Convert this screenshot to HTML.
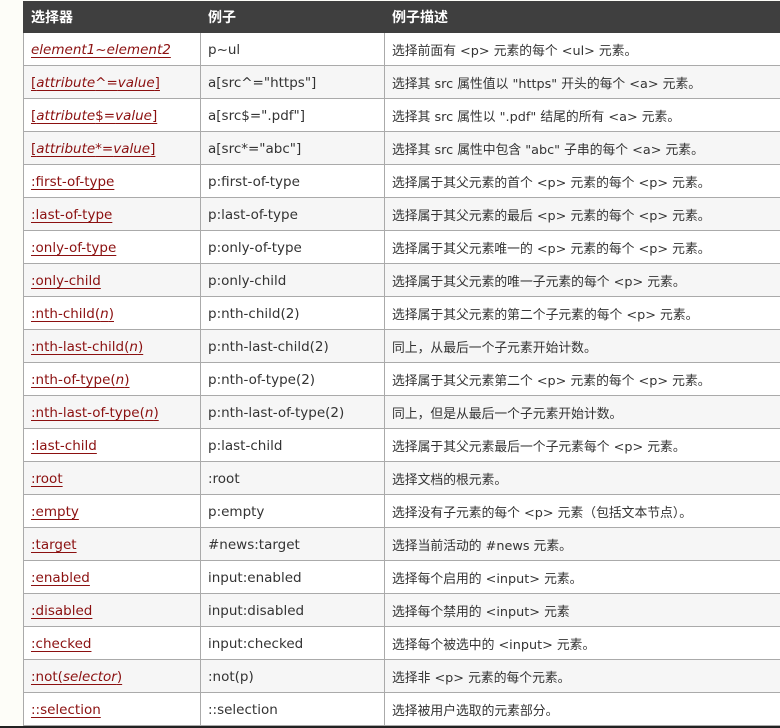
<!DOCTYPE html>
<html><head><meta charset="utf-8"><style>
html,body{margin:0;padding:0;background:#fdfdf8;width:780px;height:728px;overflow:hidden}
table{position:absolute;left:23px;top:1px;border-collapse:collapse;width:758px;font-family:"DejaVu Sans","Noto Sans CJK SC",sans-serif;font-size:13.5px;color:#333}
th{background:#3f3f3f;color:#fff;text-align:left;height:30px;padding:0 7px;font-family:"Liberation Sans","Noto Sans CJK SC",sans-serif;font-size:14px;font-weight:bold;border:1px solid #3f3f3f}
td{height:31px;padding:1px 7px 0;border:1px solid #aaa;background:#fff;white-space:nowrap}
tr:nth-child(odd) td{background:#f6f6f6}
td:nth-child(3){font-size:12.8px}
a{color:#8b1010;text-decoration:underline;text-underline-offset:3px}
.bar{position:absolute;left:0;top:726px;width:780px;height:2px;background:#222}
</style></head><body>
<table>
<colgroup><col style="width:177px"><col style="width:184px"><col></colgroup>
<tr><th>选择器</th><th>例子</th><th>例子描述</th></tr>
<tr><td><a><i>element1~element2</i></a></td><td>p~ul</td><td>选择前面有 &lt;p&gt; 元素的每个 &lt;ul&gt; 元素。</td></tr>
<tr><td><a>[<i>attribute</i>^=<i>value</i>]</a></td><td>a[src^="https"]</td><td>选择其 src 属性值以 "https" 开头的每个 &lt;a&gt; 元素。</td></tr>
<tr><td><a>[<i>attribute</i>$=<i>value</i>]</a></td><td>a[src$=".pdf"]</td><td>选择其 src 属性以 ".pdf" 结尾的所有 &lt;a&gt; 元素。</td></tr>
<tr><td><a>[<i>attribute</i>*=<i>value</i>]</a></td><td>a[src*="abc"]</td><td>选择其 src 属性中包含 "abc" 子串的每个 &lt;a&gt; 元素。</td></tr>
<tr><td><a>:first-of-type</a></td><td>p:first-of-type</td><td>选择属于其父元素的首个 &lt;p&gt; 元素的每个 &lt;p&gt; 元素。</td></tr>
<tr><td><a>:last-of-type</a></td><td>p:last-of-type</td><td>选择属于其父元素的最后 &lt;p&gt; 元素的每个 &lt;p&gt; 元素。</td></tr>
<tr><td><a>:only-of-type</a></td><td>p:only-of-type</td><td>选择属于其父元素唯一的 &lt;p&gt; 元素的每个 &lt;p&gt; 元素。</td></tr>
<tr><td><a>:only-child</a></td><td>p:only-child</td><td>选择属于其父元素的唯一子元素的每个 &lt;p&gt; 元素。</td></tr>
<tr><td><a>:nth-child(<i>n</i>)</a></td><td>p:nth-child(2)</td><td>选择属于其父元素的第二个子元素的每个 &lt;p&gt; 元素。</td></tr>
<tr><td><a>:nth-last-child(<i>n</i>)</a></td><td>p:nth-last-child(2)</td><td>同上，从最后一个子元素开始计数。</td></tr>
<tr><td><a>:nth-of-type(<i>n</i>)</a></td><td>p:nth-of-type(2)</td><td>选择属于其父元素第二个 &lt;p&gt; 元素的每个 &lt;p&gt; 元素。</td></tr>
<tr><td><a>:nth-last-of-type(<i>n</i>)</a></td><td>p:nth-last-of-type(2)</td><td>同上，但是从最后一个子元素开始计数。</td></tr>
<tr><td><a>:last-child</a></td><td>p:last-child</td><td>选择属于其父元素最后一个子元素每个 &lt;p&gt; 元素。</td></tr>
<tr><td><a>:root</a></td><td>:root</td><td>选择文档的根元素。</td></tr>
<tr><td><a>:empty</a></td><td>p:empty</td><td>选择没有子元素的每个 &lt;p&gt; 元素（包括文本节点）。</td></tr>
<tr><td><a>:target</a></td><td>#news:target</td><td>选择当前活动的 #news 元素。</td></tr>
<tr><td><a>:enabled</a></td><td>input:enabled</td><td>选择每个启用的 &lt;input&gt; 元素。</td></tr>
<tr><td><a>:disabled</a></td><td>input:disabled</td><td>选择每个禁用的 &lt;input&gt; 元素</td></tr>
<tr><td><a>:checked</a></td><td>input:checked</td><td>选择每个被选中的 &lt;input&gt; 元素。</td></tr>
<tr><td><a>:not(<i>selector</i>)</a></td><td>:not(p)</td><td>选择非 &lt;p&gt; 元素的每个元素。</td></tr>
<tr><td><a>::selection</a></td><td>::selection</td><td>选择被用户选取的元素部分。</td></tr>
</table>
<div class="bar"></div>
</body></html>
